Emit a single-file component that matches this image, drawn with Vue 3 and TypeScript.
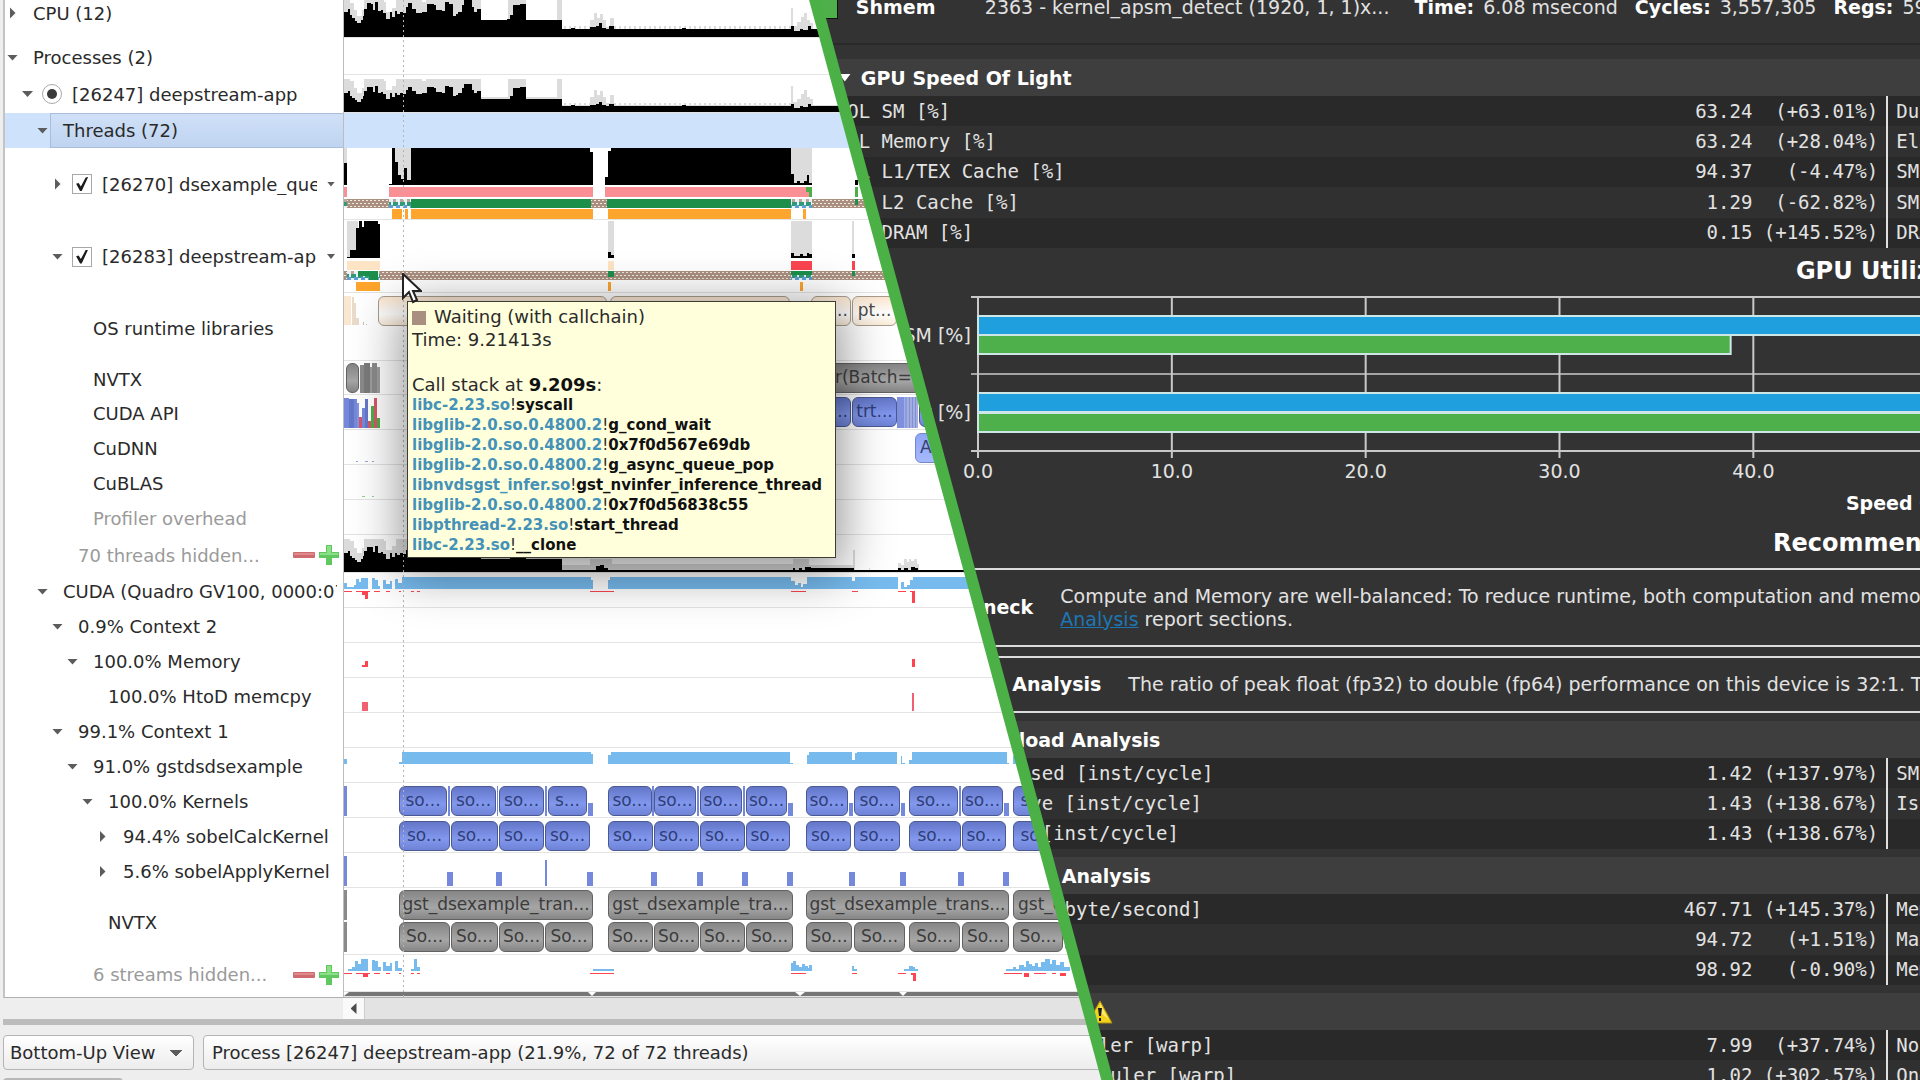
<script setup lang="ts">
type Bar = [x: number, y: number, w: number, h: number, fill: string]
type Chip = [x: number, y: number, w: number, text: string, tone: string]
type Step = [x: number, top: number]
interface Shape { d: string; fill: string }
interface Row {
  h: number
  label?: string
  level?: number
  arrow?: 'open' | 'closed'
  kind?: 'radio' | 'check' | 'hidden' | 'selected'
  high?: boolean
  shapes?: Shape[]
  bars?: Bar[]
  chips?: Chip[]
}

const BLACK = '#000000'
const GRAY = '#dcdcdc'
const GREEN = '#1c8f4a'
const ORANGE = '#fda52c'
const PINK = '#fb8f96'
const RED = '#fb4550'
const SKY = '#77bbee'
const PEACH = '#fde4c4'
const BLUE = '#7589dc'
const STEEL = '#8a8a8a'
const HATCH = 'url(#wait)'
const MIX = 'url(#mixed)'

function area(steps: Step[], base: number, end: number, scale = 1): string {
  let d = ''
  steps.forEach(([x, top], i) => {
    const next = i + 1 < steps.length ? steps[i + 1][0] : end
    const y = Math.round(base - (37 - top) * scale)
    d += i === 0 ? `M${x} ${base}V${y}H${next}` : `V${y}H${next}`
  })
  return d + `V${base}Z`
}

function block(steps: Step[], base: number, end: number): string {
  let d = `M${steps[0][0]} ${base}`
  steps.forEach(([, top], i) => {
    d += `V${top}H${i + 1 < steps.length ? steps[i + 1][0] : end}`
  })
  return d + `V${base}Z`
}

function ticks(from: number, to: number, y: number, h: number): string {
  let d = ''
  for (let x = from; x < to; x += 5) d += `M${x} ${y}h2v${h}h-2z`
  return d
}

const load: Step[] = [
  [0, 12], [4, 9], [6, 15], [8, 18], [11, 21], [13, 23], [17, 20], [19, 16], [20, 9], [23, 3], [27, 4], [29, 10], [31, 2],
  [34, 11], [37, 10], [39, 13], [42, 19], [46, 12], [48, 17], [51, 11], [53, 14], [56, 12], [59, 13], [62, 7],
  [64, 3], [68, 9], [72, 13], [78, 12], [83, 4], [90, 5], [92, 10], [98, 11], [101, 2], [105, 4], [109, 16], [112, 14],
  [114, 12], [118, 5], [120, 0], [128, 7], [130, 12], [133, 9], [137, 20], [163, 19], [166, 15], [169, 5], [176, 4],
  [182, 20], [218, 29], [227, 28], [231, 29], [246, 27], [252, 26], [255, 23], [258, 28], [262, 29], [265, 26],
  [270, 29], [338, 28], [342, 29], [447, 26], [450, 31], [456, 29], [459, 30], [464, 26], [467, 29],
]
const peak: Step[] = [
  [0, 0], [6, 3], [10, 10], [13, 16], [18, 10], [20, 0], [40, 2], [42, 12], [48, 8], [52, 0], [78, 2], [82, 0], [137, 20],
  [164, 0], [182, 20], [213, 0], [218, 29], [246, 20], [250, 13], [253, 18], [256, 14], [259, 20], [262, 27],
  [266, 18], [270, 29], [447, 8], [449, 26], [453, 22], [457, 17], [460, 13], [463, 20], [466, 23], [469, 29],
]
const hiddenLoad: Step[] = [
  ...load.filter(([x]) => x < 218), [218, 36], [248, 34], [252, 29], [256, 28], [260, 32], [264, 36],
  [449, 31], [451, 35], [455, 32], [458, 34], [461, 30], [467, 31], [510, 36], [554, 31], [557, 35], [560, 31], [564, 34], [567, 30], [571, 32], [574, 36],
]
const hiddenPeak: Step[] = [
  ...peak.filter(([x]) => x < 218), [218, 29], [246, 22], [268, 28], [449, 22], [465, 29], [509, 12], [511, 36], [525, 32], [526, 36],
  [554, 27], [557, 29], [560, 23], [563, 26], [565, 22], [567, 25], [570, 23], [573, 28], [575, 36],
]
const copyNoise: Step[] = [
  [0, 10], [3, 14], [10, 12], [12, 6], [15, 9], [17, 5], [24, 16], [28, 5], [31, 7], [34, 13], [36, 16], [39, 7], [42, 11],
  [46, 8], [48, 16], [51, 6], [54, 10],
]
const streamNoise: Step[] = [
  [4, 14], [8, 12], [11, 6], [14, 9], [17, 4], [24, 16], [28, 5], [31, 6], [34, 12], [37, 16], [39, 7], [42, 11], [46, 8],
  [48, 16], [51, 6], [54, 13],
]

function reds(y: number): Bar[] {
  return [[0, y, 8, 1, RED], [12, y, 14, 1, RED], [30, y, 6, 1, RED], [42, y, 4, 1, RED], [55, y, 2, 1, RED], [67, y, 3, 1, RED], [73, y, 3, 1, RED]]
}

function many(list: [number, number][], y: number, text: string, tone: string): Chip[] {
  return list.map(([a, b]) => [a, y, b - a, text, tone])
}

const kernelSpans: [number, number][] = [
  [55, 103], [107, 152], [155, 200], [204, 243], [264, 308], [310, 352], [356, 398], [402, 443],
  [462, 504], [510, 556], [565, 614], [618, 659], [669, 719],
]
const calcSpans: [number, number][] = [
  [55, 106], [107, 154], [155, 200], [201, 246], [264, 309], [310, 355], [356, 401], [402, 446],
  [462, 507], [510, 556], [565, 617], [618, 662], [669, 719],
]
const rangeSpans: [number, number][] = [
  [55, 106], [107, 154], [155, 200], [201, 249], [264, 309], [310, 355], [356, 401], [402, 449],
  [462, 508], [510, 561], [565, 616], [618, 665], [669, 719],
]
const applyX = [103, 152, 243, 307, 353, 398, 443, 505, 556, 614, 659]

const rows: Row[] = [
  {
    h: 38, label: 'CPU (12)', level: 0, arrow: 'closed', high: true,
    shapes: [
      { d: area(peak, 37, 520) + ticks(220, 447, 26, 4), fill: GRAY },
      { d: area(load, 37, 520), fill: BLACK },
    ],
  },
  { h: 37, label: 'Processes (2)', level: 0, arrow: 'open' },
  {
    h: 38, label: '[26247] deepstream-app', level: 1, arrow: 'open', kind: 'radio',
    shapes: [
      { d: area(peak, 37, 560, 0.9) + ticks(220, 447, 28, 4), fill: GRAY },
      { d: area(load, 37, 560, 0.75), fill: BLACK },
    ],
  },
  { h: 35, label: 'Threads (72)', level: 2, arrow: 'open', kind: 'selected' },
  {
    h: 72, label: '[26270] dsexample_queue', level: 3, arrow: 'closed', kind: 'check',
    shapes: [
      { d: 'M0 37V0H3V37ZM48 37V0H67V37ZM447 37V0H468V37Z', fill: GRAY },
      {
        d: 'M0 37V15H3V37Z' + block([[45, 36], [48, 0], [51, 14], [54, 27], [57, 31], [60, 20], [63, 32], [65, 32], [67, 0], [246, 4]], 37, 249)
          + block([[261, 29], [264, 3], [267, 0], [447, 26], [450, 35], [453, 33], [456, 35], [460, 33], [463, 27], [465, 35]], 37, 468)
          + 'M511 37V32H514V37Z',
        fill: BLACK,
      },
    ],
    bars: [
      [0, 39, 3, 10, PINK], [45, 39, 204, 10, PINK], [261, 39, 207, 10, PINK], [462, 39, 6, 5, '#4caf4a'], [465, 43, 3, 6, '#4caf4a'], [511, 39, 3, 10, '#4caf4a'],
      [0, 51, 640, 9, HATCH], [0, 51, 3, 9, MIX], [45, 51, 22, 9, MIX], [67, 51, 180, 9, GREEN], [263, 51, 184, 9, GREEN],
      [447, 51, 21, 9, MIX], [511, 51, 3, 6, GREEN],
      [48, 61, 10, 10, ORANGE], [61, 61, 3, 10, ORANGE], [67, 61, 182, 10, ORANGE], [264, 61, 183, 10, ORANGE], [459, 61, 3, 10, ORANGE],
    ],
  },
  {
    h: 73, label: '[26283] deepstream-app', level: 3, arrow: 'open', kind: 'check',
    shapes: [
      { d: 'M3 38V1H14V38ZM264 38V1H270V38ZM447 38V1H468V38ZM508 38V1H510V38Z', fill: GRAY },
      {
        d: block([[3, 37], [6, 30], [12, 8], [15, 1], [18, 7], [20, 1], [34, 4]], 38, 36) + block([[264, 32], [267, 35]], 38, 270)
          + block([[447, 33], [450, 36], [456, 34], [459, 36], [463, 33], [465, 34]], 38, 468) + 'M508 38V34H511V38Z',
        fill: BLACK,
      },
    ],
    bars: [
      [3, 41, 33, 9, PEACH], [264, 41, 6, 9, PEACH], [447, 41, 21, 9, RED], [508, 41, 3, 9, RED],
      [0, 51, 640, 9, HATCH], [3, 51, 33, 9, MIX], [14, 51, 20, 5, GREEN], [25, 51, 9, 9, GREEN], [264, 51, 6, 6, GREEN], [447, 51, 21, 9, MIX], [447, 51, 21, 4, GREEN], [508, 51, 3, 5, GREEN],
      [12, 62, 24, 9, ORANGE], [264, 62, 3, 9, ORANGE], [456, 62, 3, 9, ORANGE],
    ],
  },
  {
    h: 68, label: 'OS runtime libraries', level: 4,
    bars: [
      [0, 3, 7, 29, '#fbe6cf'], [8, 4, 2, 28, '#eadccb'], [10, 10, 2, 22, '#eadccb'], [12, 25, 3, 7, '#eadccb'], [19, 29, 1, 3, '#ccbba8'], [22, 31, 1, 1, '#ccbba8'],
    ],
    chips: [
      [34, 3, 229, '', 'cream'], [266, 3, 180, '', 'cream'], [467, 3, 40, 'pt...', 'cream'], [508, 3, 45, 'pt...', 'cream'],
    ],
  },
  {
    h: 34, label: 'NVTX', level: 4,
    bars: [
      [16, 4, 5, 28, STEEL], [20, 2, 6, 30, '#7a7a7a'], [26, 6, 3, 26, '#9d9d9d'], [28, 2, 5, 30, STEEL], [33, 6, 3, 26, '#9d9d9d'],
    ],
    chips: [[2, 2, 13, '', 'gray'], [486, 2, 300, 'r(Batch=1)', 'gray left']],
  },
  {
    h: 35, label: 'CUDA API', level: 4,
    bars: [
      [0, 3, 5, 30, BLUE], [5, 4, 5, 29, '#6477c8'], [10, 4, 3, 29, BLUE], [13, 8, 2, 25, '#8395e2'], [15, 22, 3, 11, '#d9566a'], [18, 13, 3, 20, BLUE],
      [21, 4, 3, 29, '#6477c8'], [24, 26, 3, 7, '#d9566a'], [27, 11, 3, 22, '#4caf4a'], [30, 3, 3, 30, '#d9566a'], [33, 23, 3, 10, '#4caf4a'],
      [553, 2, 7, 31, '#7d8fdd'], [560, 2, 14, 31, '#a3aedf'], [561, 2, 2, 31, '#8d9ce0'], [565, 2, 1, 31, '#8090d4'], [568, 2, 1, 31, '#8090d4'], [571, 2, 1, 31, '#8090d4'],
    ],
    chips: [[440, 2, 67, 'trt...', 'blue right'], [508, 2, 45, 'trt...', 'blue'], [575, 2, 60, '', 'blue']],
  },
  {
    h: 35, label: 'CuDNN', level: 4,
    bars: [[12, 31, 2, 1, '#96a4d8'], [21, 31, 3, 1, '#96a4d8'], [28, 31, 2, 1, '#96a4d8']],
    chips: [[571, 3, 60, 'A', 'pale left']],
  },
  { h: 35, label: 'CuBLAS', level: 4, bars: [[18, 31, 3, 1, '#8fd08d'], [28, 31, 2, 1, '#8fd08d']] },
  { h: 35, label: 'Profiler overhead', level: 4, kind: undefined },
  {
    h: 38, label: '70 threads hidden...', level: 3, kind: 'hidden',
    shapes: [
      { d: area(hiddenPeak, 37, 640, 0.9), fill: GRAY },
      { d: area(hiddenLoad, 37, 640, 0.75) + 'M0 35H640V38H0Z', fill: BLACK },
    ],
  },
  {
    h: 35, label: 'CUDA (Quadro GV100, 0000:07:00.0)', level: 2, arrow: 'open',
    shapes: [
      {
        d: block(copyNoise, 16, 58) + block([[58, 4], [247, 7], [249, 16], [264, 7], [266, 4], [447, 8], [451, 12], [454, 10], [457, 14], [459, 11], [463, 4], [508, 8], [511, 4], [554, 16], [557, 9], [560, 14], [563, 12], [566, 7], [569, 4]], 16, 660),
        fill: SKY,
      },
    ],
    bars: [...reds(18), [18, 18, 6, 4, RED], [21, 18, 3, 8, RED], [246, 18, 24, 1, RED], [447, 18, 15, 1, RED], [508, 18, 6, 1, RED], [554, 18, 8, 1, RED], [566, 18, 5, 1, RED], [568, 18, 3, 12, RED]],
  },
  { h: 35, label: '0.9% Context 2', level: 3, arrow: 'open' },
  { h: 35, label: '100.0% Memory', level: 4, arrow: 'open', bars: [[18, 22, 6, 2, RED], [21, 18, 3, 6, RED], [568, 16, 3, 8, RED]] },
  { h: 35, label: '100.0% HtoD memcpy', level: 5, bars: [[18, 24, 6, 9, '#f0606e'], [568, 15, 2, 18, '#f0606e']] },
  { h: 35, label: '99.1% Context 1', level: 3, arrow: 'open' },
  {
    h: 35, label: '91.0% gstdsdsexample', level: 4, arrow: 'open',
    shapes: [
      {
        d: block([[0, 11]], 16, 3) + block([[55, 14], [58, 4], [247, 6]], 16, 249) + block([[264, 7], [267, 4], [446, 15]], 16, 449)
          + block([[463, 7], [465, 4], [508, 12], [511, 5], [513, 4], [553, 16], [557, 8], [558, 15]], 16, 561) + block([[565, 12], [568, 4], [663, 15]], 16, 665) + block([[669, 8]], 16, 700),
        fill: SKY,
      },
    ],
  },
  {
    h: 35, label: '100.0% Kernels', level: 5, arrow: 'open',
    bars: [
      [0, 3, 3, 30, BLUE], [104, 3, 2, 30, BLUE], [153, 3, 1, 30, BLUE], [201, 3, 2, 30, BLUE], [244, 20, 5, 13, BLUE], [308, 3, 2, 30, BLUE], [353, 3, 2, 30, BLUE],
      [399, 3, 2, 30, BLUE], [444, 20, 5, 13, BLUE], [505, 20, 4, 13, BLUE], [557, 20, 4, 13, BLUE], [615, 3, 2, 30, BLUE], [660, 20, 5, 13, BLUE],
    ],
    chips: many(kernelSpans, 3, 'so...', 'blue').map((c, i) => (i === 3 ? [c[0], c[1], c[2], 's...', c[4]] : c) as Chip),
  },
  { h: 35, label: '94.4% sobelCalcKernel', level: 6, arrow: 'closed', chips: many(calcSpans, 3, 'so...', 'blue') },
  {
    h: 35, label: '5.6% sobelApplyKernel', level: 6, arrow: 'closed',
    bars: [[0, 3, 3, 30, BLUE], [201, 7, 2, 26, BLUE], ...applyX.map((x): Bar => [x, 19, 6, 14, BLUE])],
  },
  {
    h: 67, label: 'NVTX', level: 5,
    bars: [[0, 2, 3, 30, STEEL], [0, 34, 3, 30, STEEL]],
    chips: [
      [55, 2, 194, 'gst_dsexample_tran...', 'gray'], [264, 2, 185, 'gst_dsexample_tra...', 'gray'],
      [462, 2, 203, 'gst_dsexample_trans...', 'gray'], [669, 2, 200, 'gst_dsexample', 'gray left'],
      ...many(rangeSpans, 34, 'So...', 'gray'), [721, 34, 49, '', 'gray'],
    ],
  },
  {
    h: 37, label: '6 streams hidden...', level: 4, kind: 'hidden',
    shapes: [
      {
        d: block(streamNoise, 16, 58) + block([[67, 14], [70, 4], [73, 12]], 16, 76) + block([[249, 14]], 16, 270)
          + block([[447, 8], [449, 6], [452, 10], [455, 12], [458, 9], [461, 11], [464, 13], [465, 10]], 16, 468) + block([[508, 11], [510, 14]], 16, 513)
          + block([[560, 14], [565, 11], [569, 12], [571, 14]], 16, 574)
          + block([[662, 14], [669, 12], [672, 14], [675, 10], [680, 12], [682, 6], [685, 9], [688, 11], [691, 8], [694, 12], [697, 7], [701, 4], [706, 9], [708, 5], [712, 10], [716, 7], [720, 12]], 16, 726),
        fill: SKY,
      },
    ],
    bars: [...reds(18), [19, 19, 5, 3, RED], [246, 18, 24, 1, RED], [447, 18, 15, 1, RED], [508, 18, 5, 1, RED], [554, 18, 8, 1, RED], [567, 18, 5, 2, RED], [569, 20, 3, 6, RED], [660, 18, 18, 1, RED], [680, 18, 5, 4, RED], [690, 18, 12, 1, RED], [708, 18, 4, 1, RED], [716, 18, 6, 3, RED]],
  },
  {
    h: 5,
    shapes: [{ d: 'M0 5V4L5 0H244L248 4L252 0H451L456 4L461 0H555L559 4L563 0H760V5Z', fill: '#767676' }],
  },
]

const stack: [string, string][] = [
  ['libc-2.23.so', 'syscall'],
  ['libglib-2.0.so.0.4800.2', 'g_cond_wait'],
  ['libglib-2.0.so.0.4800.2', '0x7f0d567e69db'],
  ['libglib-2.0.so.0.4800.2', 'g_async_queue_pop'],
  ['libnvdsgst_infer.so', 'gst_nvinfer_inference_thread'],
  ['libglib-2.0.so.0.4800.2', '0x7f0d56838c55'],
  ['libpthread-2.23.so', 'start_thread'],
  ['libc-2.23.so', '__clone'],
]

interface Metric { name: string; value: string; delta: string; next: string }
const m = (name: string, value: string, delta: string, next: string): Metric => ({ name, value, delta, next })

const speed = [
  m('SOL SM [%]', '63.24', '(+63.01%)', 'Duration'),
  m('SOL Memory [%]', '63.24', '(+28.04%)', 'Elapsed Cycles'),
  m('SOL L1/TEX Cache [%]', '94.37', '(-4.47%)', 'SM Active Cycles'),
  m('SOL L2 Cache [%]', '1.29', '(-62.82%)', 'SM Frequency'),
  m('SOL DRAM [%]', '0.15', '(+145.52%)', 'DRAM Frequency'),
]
const sections = [
  {
    title: 'Compute Workload Analysis', warn: false,
    metrics: [
      m('Executed Ipc Elapsed [inst/cycle]', '1.42', '(+137.97%)', 'SM Busy'),
      m('Executed Ipc Active [inst/cycle]', '1.43', '(+138.67%)', 'Issue Slots Busy'),
      m('Issued Ipc Active [inst/cycle]', '1.43', '(+138.67%)', ''),
    ],
  },
  {
    title: 'Memory Workload Analysis', warn: false,
    metrics: [
      m('Memory Throughput [Gbyte/second]', '467.71', '(+145.37%)', 'Mem Busy'),
      m('', '94.72', '(+1.51%)', 'Max Bandwidth'),
      m('', '98.92', '(-0.90%)', 'Mem Pipes Busy'),
    ],
  },
  {
    title: 'Scheduler Statistics', warn: true,
    metrics: [
      m('Active Warps Per Scheduler [warp]', '7.99', '(+37.74%)', 'No Eligible'),
      m('Eligible Warps Per Scheduler [warp]', '1.02', '(+302.57%)', 'One or More Eligible'),
    ],
  },
]
const axis = [0, 10, 20, 30, 40, 50, 60, 70, 80, 90, 100]
const chartBars = [
  { y: 19, w: 63.24, fill: '#209fdf' },
  { y: 38, w: 38.83, fill: '#4eb04a' },
  { y: 96, w: 63.24, fill: '#209fdf' },
  { y: 116, w: 49.3, fill: '#4eb04a' },
]
</script>

<template>
  <main class="page">
    <section class="systems">
      <div class="timeline">
        <svg class="defs" aria-hidden="true">
          <defs>
            <pattern id="wait" width="4" height="6" patternUnits="userSpaceOnUse">
              <rect width="4" height="6" fill="#ab9080" />
              <rect x="0" y="1" width="2" height="1" fill="#efe8e4" />
              <rect x="2" y="4" width="2" height="1" fill="#efe8e4" />
            </pattern>
            <pattern id="mixed" width="7" height="9" patternUnits="userSpaceOnUse">
              <rect width="7" height="9" fill="#e9f1f5" />
              <rect width="5" height="4" fill="#2f9a78" />
              <rect x="3" y="3" width="4" height="3" fill="#5b9fd6" />
              <rect x="0" y="6" width="3" height="3" fill="#b9a599" />
            </pattern>
          </defs>
        </svg>
        <div
          v-for="(row, i) in rows"
          :key="i"
          class="row"
          :class="[row.kind, { high: row.high }]"
          :style="{ height: row.h + 'px' }"
        >
          <div class="label" :style="{ paddingLeft: (row.level ?? 0) * 15 + 'px' }">
            <template v-if="row.label">
              <button v-if="row.arrow" class="twist" :class="row.arrow" :aria-label="'Toggle ' + row.label"></button>
              <span v-else class="twist"></span>
              <label v-if="row.kind === 'radio' || row.kind === 'check'" class="pick">
                <input :type="row.kind === 'radio' ? 'radio' : 'checkbox'" checked />
                <span>{{ row.label }}</span>
              </label>
              <span v-else class="name" :class="{ dim: row.label === 'Profiler overhead' }">{{ row.label }}</span>
              <button v-if="row.kind === 'check'" class="more" aria-label="Thread menu"></button>
              <span v-if="row.kind === 'hidden'" class="tools">
                <button aria-label="Show fewer">
                  <svg width="22" height="22"><rect x="0" y="8" width="22" height="6" rx="1" fill="#cf6a6e" /><rect x="1" y="9" width="20" height="2" fill="#dd8a8c" /></svg>
                </button>
                <button aria-label="Show more">
                  <svg width="22" height="22"><path d="M8 1h6v7h7v6h-7v7H8v-7H1V8h7z" fill="#5fc95f" /><path d="M9 2h4v7h7v2H2V9h7z" fill="#8adf88" /></svg>
                </button>
              </span>
            </template>
          </div>
          <div class="track">
            <svg v-if="row.shapes || row.bars" class="plot">
              <path v-for="(s, k) in row.shapes" :key="'s' + k" :d="s.d" :fill="s.fill" />
              <rect v-for="(b, k) in row.bars" :key="'b' + k" :x="b[0]" :y="b[1]" :width="b[2]" :height="b[3]" :fill="b[4]" />
            </svg>
            <span
              v-for="(c, k) in row.chips"
              :key="'c' + k"
              class="chip"
              :class="c[4]"
              :style="{ left: c[0] + 'px', top: c[1] + 'px', width: c[2] + 'px' }"
            >{{ c[3] }}</span>
          </div>
        </div>
        <div class="marker"></div>
        <div class="tooltip" role="tooltip">
          <p><i class="swatch"></i>Waiting (with callchain)</p>
          <p>Time: 9.21413s</p>
          <p class="at">Call stack at <b>9.209s</b>:</p>
          <ul>
            <li v-for="(f, i) in stack" :key="i"><b class="lib">{{ f[0] }}</b>!<b>{{ f[1] }}</b></li>
          </ul>
        </div>
        <svg class="pointer" width="20" height="32" aria-hidden="true">
          <path d="M1 1V25L7 19L11 29L15 27L11 18H19Z" fill="#ffffff" stroke="#222222" stroke-width="2" />
        </svg>
      </div>

      <div class="scroll">
        <button aria-label="Scroll left"></button>
        <div class="rail"></div>
      </div>
      <div class="splitter"></div>
      <div class="toolbar">
        <select class="view" aria-label="View">
          <option>Bottom-Up View</option>
        </select>
        <select class="process" aria-label="Process">
          <option>Process [26247] deepstream-app (21.9%, 72 of 72 threads)</option>
        </select>
      </div>
      <div class="tab"></div>
    </section>

    <section class="compute">
      <div class="report">
        <header class="summary">
          <i class="color"></i>
          <b class="title">Shmem</b>
          <span class="kernel">2363 - kernel_apsm_detect (1920, 1, 1)x...</span>
          <span class="fact"><b>Time:</b>6.08 msecond</span>
          <span class="fact"><b>Cycles:</b>3,557,305</span>
          <span class="fact"><b>Regs:</b>59</span>
        </header>

        <h2 class="bar"><i class="fold"></i>GPU Speed Of Light</h2>
        <table class="metrics five">
          <tbody>
            <tr v-for="r in speed" :key="r.name">
              <th scope="row">{{ r.name }}</th>
              <td class="value">{{ r.value + ' ' + r.delta.padStart(10) }}</td>
              <td class="next">{{ r.next }}</td>
            </tr>
          </tbody>
        </table>

        <h3>GPU Utilization</h3>
        <div class="chart">
          <div class="cats"><span>SM [%]</span><span>Memory [%]</span></div>
          <svg class="canvas">
            <g stroke="#c9c9c9" stroke-width="2">
              <line x1="-7" x2="100%" y1="1" y2="1" />
              <line x1="-7" x2="100%" y1="78" y2="78" stroke="#a4a4a4" />
              <line x1="-7" x2="100%" y1="155" y2="155" />
              <line v-for="a in axis" :key="a" :x1="a + '%'" :x2="a + '%'" y1="1" y2="162" />
            </g>
            <rect v-for="b in chartBars" :key="b.y" x="0" :y="b.y + 1" :width="b.w + '%'" height="19" :fill="b.fill" stroke="#cfe6e6" stroke-width="2" />
            <text v-for="a in axis" :key="'t' + a" :x="a + '%'" y="182" text-anchor="middle">{{ a.toFixed(1) }}</text>
          </svg>
          <p class="caption">Speed Of Light [%]</p>
        </div>

        <h3>Recommendations</h3>
        <div class="advice tall">
          <b>Bottleneck</b>
          <p>Compute and Memory are well-balanced: To reduce runtime, both computation and memory traffic must be reduced.<br /><a href="#analysis">Analysis</a> report sections.</p>
        </div>
        <div class="advice">
          <b>Roofline Analysis</b>
          <p>The ratio of peak float (fp32) to double (fp64) performance on this device is 32:1. The kernel achieved close to peak.</p>
        </div>

        <template v-for="s in sections" :key="s.title">
          <h2 class="bar">
            <i class="fold"></i>{{ s.title }}
            <svg v-if="s.warn" width="26" height="24" aria-label="Warning">
              <path d="M13 1L25 23H1Z" fill="#f2d21c" stroke="#b08c10" />
              <path d="M13 3L22 20L13 12Z" fill="#fbe96a" />
              <path d="M11 8H15L14 16H12ZM12 18H14V21H12Z" fill="#1a1a1a" />
            </svg>
          </h2>
          <table class="metrics three" :class="{ two: s.metrics.length === 2 }">
            <tbody>
              <tr v-for="(r, k) in s.metrics" :key="k">
                <th scope="row">{{ r.name }}</th>
                <td class="value">{{ r.value + ' ' + r.delta.padStart(10) }}</td>
                <td class="next">{{ r.next }}</td>
              </tr>
            </tbody>
          </table>
        </template>
      </div>
    </section>
    <div class="divider"></div>
  </main>
</template>

<style>
body {
  margin: 0;
  background: #eeeeee;
}
</style>

<style scoped>
* {
  box-sizing: border-box;
}
.page {
  position: relative;
  display: grid;
  height: 100vh;
  overflow: hidden;
  background: #eeeeee;
  font-family: "DejaVu Sans", sans-serif;
  font-size: 18px;
  color: #2a2a2a;
}
button {
  padding: 0;
  border: 0;
  background: none;
}
.systems,
.compute {
  grid-area: 1 / 1;
  min-width: 0;
}

/* timeline window */
.systems {
  padding-left: 3px;
}
.timeline {
  position: relative;
  border-left: 2px solid #c4c4c4;
  border-bottom: 1px solid #b0b0b0;
  background: #ffffff;
}
.defs {
  position: absolute;
  width: 0;
  height: 0;
}
.row {
  display: grid;
  grid-template-columns: 339px minmax(0, 1fr);
}
.label {
  display: flex;
  align-items: center;
  min-width: 0;
  padding-top: 2px;
  overflow: hidden;
  white-space: nowrap;
  border-right: 1px solid #bdbdbd;
}
.high .label {
  padding-bottom: 14px;
}
.radio .label,
.check .label,
.selected .label {
  padding-top: 0;
}
.twist {
  flex: none;
  width: 15px;
  height: 15px;
  display: grid;
  place-items: center;
}
.open::before,
.closed::before,
.more::before {
  content: "";
  background: #5c5c5c;
}
.open::before {
  width: 11px;
  height: 6px;
  clip-path: polygon(0 0, 100% 0, 50% 100%);
}
.closed::before {
  width: 6px;
  height: 12px;
  clip-path: polygon(0 0, 100% 50%, 0 100%);
}
.name {
  flex: 1;
  min-width: 0;
  margin-left: 13px;
  margin-right: 6px;
  overflow: hidden;
}
.dim,
.hidden .name {
  color: #9a9a9a;
}
.pick {
  flex: 1;
  display: flex;
  align-items: center;
  gap: 10px;
  min-width: 0;
  margin-left: 7px;
  overflow: hidden;
}
.pick input {
  appearance: none;
  flex: none;
  display: grid;
  place-items: center;
  width: 20px;
  height: 20px;
  margin: 0;
  border: 1px solid #a8a8a8;
  background: #ffffff;
}
.radio input {
  border-radius: 50%;
}
.radio input::before {
  content: "";
  width: 10px;
  height: 10px;
  border-radius: 50%;
  background: #3a3a3a;
}
.check input::before {
  content: "";
  width: 14px;
  height: 14px;
  background: #1c1c1c;
  clip-path: polygon(8% 48%, 26% 42%, 42% 68%, 76% 4%, 94% 0, 48% 100%, 36% 100%);
}
.more {
  flex: none;
  display: grid;
  place-items: center;
  width: 14px;
  height: 20px;
  margin-left: 7px;
  margin-right: 5px;
}
.more::before {
  width: 8px;
  height: 5px;
  clip-path: polygon(0 0, 100% 0, 50% 100%);
}
.tools {
  display: flex;
  gap: 3px;
  margin-right: 3px;
}
.tools button,
.tools svg {
  display: block;
}
.selected {
  background: #cfe2fb;
}
.selected .name {
  align-self: stretch;
  display: flex;
  align-items: center;
  margin: 0;
  padding-left: 12px;
  border: 1px solid #a9bedb;
  border-right: 0;
  background: linear-gradient(#d0e0f7, #bfd4f1);
}
.track {
  position: relative;
  overflow: hidden;
  border-bottom: 1px solid #e4e4e4;
}
.row:last-of-type .track,
.selected .track {
  border-bottom-color: transparent;
}
.plot {
  display: block;
  width: 100%;
  height: 100%;
  overflow: visible;
}
.chip {
  position: absolute;
  height: 30px;
  padding: 0 2px;
  border: 1px solid;
  border-radius: 6px;
  overflow: hidden;
  font-size: 17px;
  line-height: 27px;
  text-align: center;
  white-space: nowrap;
}
.chip.left {
  padding-left: 4px;
  text-align: left;
}
.chip.right {
  text-align: right;
}
.blue {
  border-color: #4a5992;
  background: linear-gradient(#6376c8, #8298ee 60%, #6e83d6);
  color: #303f78;
}
.pale {
  border-color: #7288cc;
  background: linear-gradient(#8fa6f8, #a6b9ff);
  color: #35406c;
}
.gray {
  border-color: #626262;
  background: linear-gradient(#858585, #a6a6a6 60%, #858585);
  color: #3c3c3c;
}
.cream {
  border-color: #a89c8e;
  background: linear-gradient(#fbe6cf, #ffffff 60%, #fbecd9);
  color: #4c4a48;
}
.marker {
  position: absolute;
  top: 0;
  bottom: 0;
  left: 398px;
  width: 1px;
  background: repeating-linear-gradient(#b4b4b4 0 2px, transparent 2px 5px);
}
.tooltip {
  position: absolute;
  top: 301px;
  left: 402px;
  width: 429px;
  height: 257px;
  padding: 3px 5px 0 4px;
  border: 1px solid #3c3c32;
  background: #ffffdc;
  box-shadow: 0 10px 46px 6px rgba(0, 0, 0, 0.42);
  line-height: 23px;
  white-space: nowrap;
}
.tooltip p,
.tooltip ul {
  margin: 0;
  padding: 0;
  list-style: none;
}
.tooltip .at {
  margin-top: 22px;
}
.tooltip b {
  color: #111111;
}
.tooltip ul {
  margin-top: -1px;
  font-size: 15px;
  line-height: 20px;
}
.tooltip .lib {
  color: #4592b8;
}
.swatch {
  display: inline-block;
  width: 14px;
  height: 14px;
  margin-right: 8px;
  background: #a98f80;
  vertical-align: -2px;
}
.pointer {
  position: absolute;
  top: 273px;
  left: 397px;
}
.scroll {
  display: flex;
  height: 21px;
  padding-left: 340px;
}
.scroll button {
  display: grid;
  place-items: center;
  width: 22px;
  border-right: 1px solid #cccccc;
  background: #fafafa;
}
.scroll button::before {
  content: "";
  width: 6px;
  height: 11px;
  background: #4c4c4c;
  clip-path: polygon(100% 0, 100% 100%, 0 50%);
}
.rail {
  flex: 1;
  background: #e3e3e3;
}
.splitter {
  height: 6px;
  background: #bcbcbc;
}
.toolbar {
  display: flex;
  gap: 9px;
  margin: 10px 0 8px;
}
.toolbar select {
  appearance: none;
  height: 35px;
  padding: 0 8px;
  border: 1px solid #b4b4b4;
  border-radius: 4px;
  background: linear-gradient(#ffffff, #ececec);
  font: inherit;
  color: inherit;
}
.toolbar .view {
  width: 191px;
  padding: 0 6px;
  background:
    linear-gradient(to bottom right, #5c5c5c 50%, transparent 51%) 172px 14px / 6px 6px no-repeat,
    linear-gradient(to bottom left, #5c5c5c 50%, transparent 51%) 166px 14px / 6px 6px no-repeat,
    linear-gradient(#ffffff, #ececec);
}
.toolbar .process {
  flex: 1;
}
.tab {
  width: 120px;
  height: 8px;
  border-radius: 4px;
  background: #b8b8b8;
}

/* kernel report window */
.compute {
  margin-left: 42.7%;
  overflow: hidden;
  background: #333333;
  color: #e2e2e2;
  font-size: 19px;
  clip-path: polygon(-5px 0, 100% 0, 100% 100%, 288px 100%);
}
.report {
  width: 196%;
}
.compute b,
h2,
h3 {
  color: #ffffff;
  font-weight: bold;
}
.summary {
  display: flex;
  align-items: flex-start;
  height: 45px;
  margin-bottom: 14px;
  border-bottom: 2px solid #2a2a2a;
  line-height: 15px;
  white-space: nowrap;
}
.color {
  width: 18px;
  height: 19px;
  border: solid #101010;
  border-width: 0 1px 1px 0;
  background: #4eb04a;
}
.title {
  width: 129px;
  margin-left: 18px;
}
.kernel {
  margin-right: 25px;
}
.fact {
  display: flex;
  gap: 9px;
  margin-right: 17px;
}
.bar {
  display: flex;
  align-items: center;
  height: 37px;
  margin: 8px 0 0;
  background: #3e3e3e;
  font-size: 19px;
}
.summary + .bar {
  margin-top: 0;
}
.bar svg {
  margin-left: 12px;
}
.fold {
  width: 12px;
  height: 8px;
  margin: 0 10px 0 19px;
  background: #ffffff;
  clip-path: polygon(0 0, 100% 0, 50% 100%);
}
.metrics {
  width: 100%;
  table-layout: fixed;
  border-collapse: collapse;
  font-family: "DejaVu Sans Mono", monospace;
  white-space: pre;
}
.five {
  height: 152px;
}
.three {
  height: 91px;
}
.two {
  height: 60px;
}
.metrics tr {
  background: #303030;
}
.metrics tr:nth-child(odd) {
  background: #292929;
}
.metrics th,
.metrics td {
  padding: 0;
  line-height: 29px;
}
.metrics th {
  width: 30%;
  padding-left: 16px;
  font-weight: normal;
  text-align: left;
}
.metrics .value {
  width: 19.5%;
  padding-right: 8px;
  border-right: 2px solid #e0e0e0;
  text-align: right;
}
.metrics .next {
  padding-left: 8px;
}
h3 {
  margin: 0;
  height: 48px;
  font-size: 24px;
  line-height: 47px;
  text-align: center;
}
.chart {
  display: grid;
  grid-template-columns: 158px minmax(0, 1fr) 60px;
  margin-bottom: 4px;
}
.cats {
  display: grid;
  grid-template-rows: 77px 77px;
  align-items: center;
  padding-right: 7px;
  text-align: right;
}
.canvas {
  width: 100%;
  height: 194px;
  overflow: visible;
}
.canvas text {
  fill: #e2e2e2;
}
.caption {
  grid-column: 2;
  margin: 0;
  color: #ffffff;
  font-weight: bold;
  line-height: 26px;
  text-align: center;
}
.advice {
  display: flex;
  align-items: center;
  gap: 27px;
  height: 57px;
  padding-left: 98px;
  border-top: 2px solid #dcdcdc;
  border-bottom: 2px solid #dcdcdc;
  line-height: 23px;
  white-space: nowrap;
}
.advice p {
  margin: 0;
}
.tall {
  height: 79px;
  margin-bottom: 9px;
}
.advice a {
  color: #1d76b4;
}
.divider {
  position: absolute;
  inset: 0;
  pointer-events: none;
  background: #4bb146;
  clip-path: polygon(42.14% 0, calc(42.14% + 12px) 0, calc(57.36% + 12px) 100%, 57.36% 100%);
}
</style>
